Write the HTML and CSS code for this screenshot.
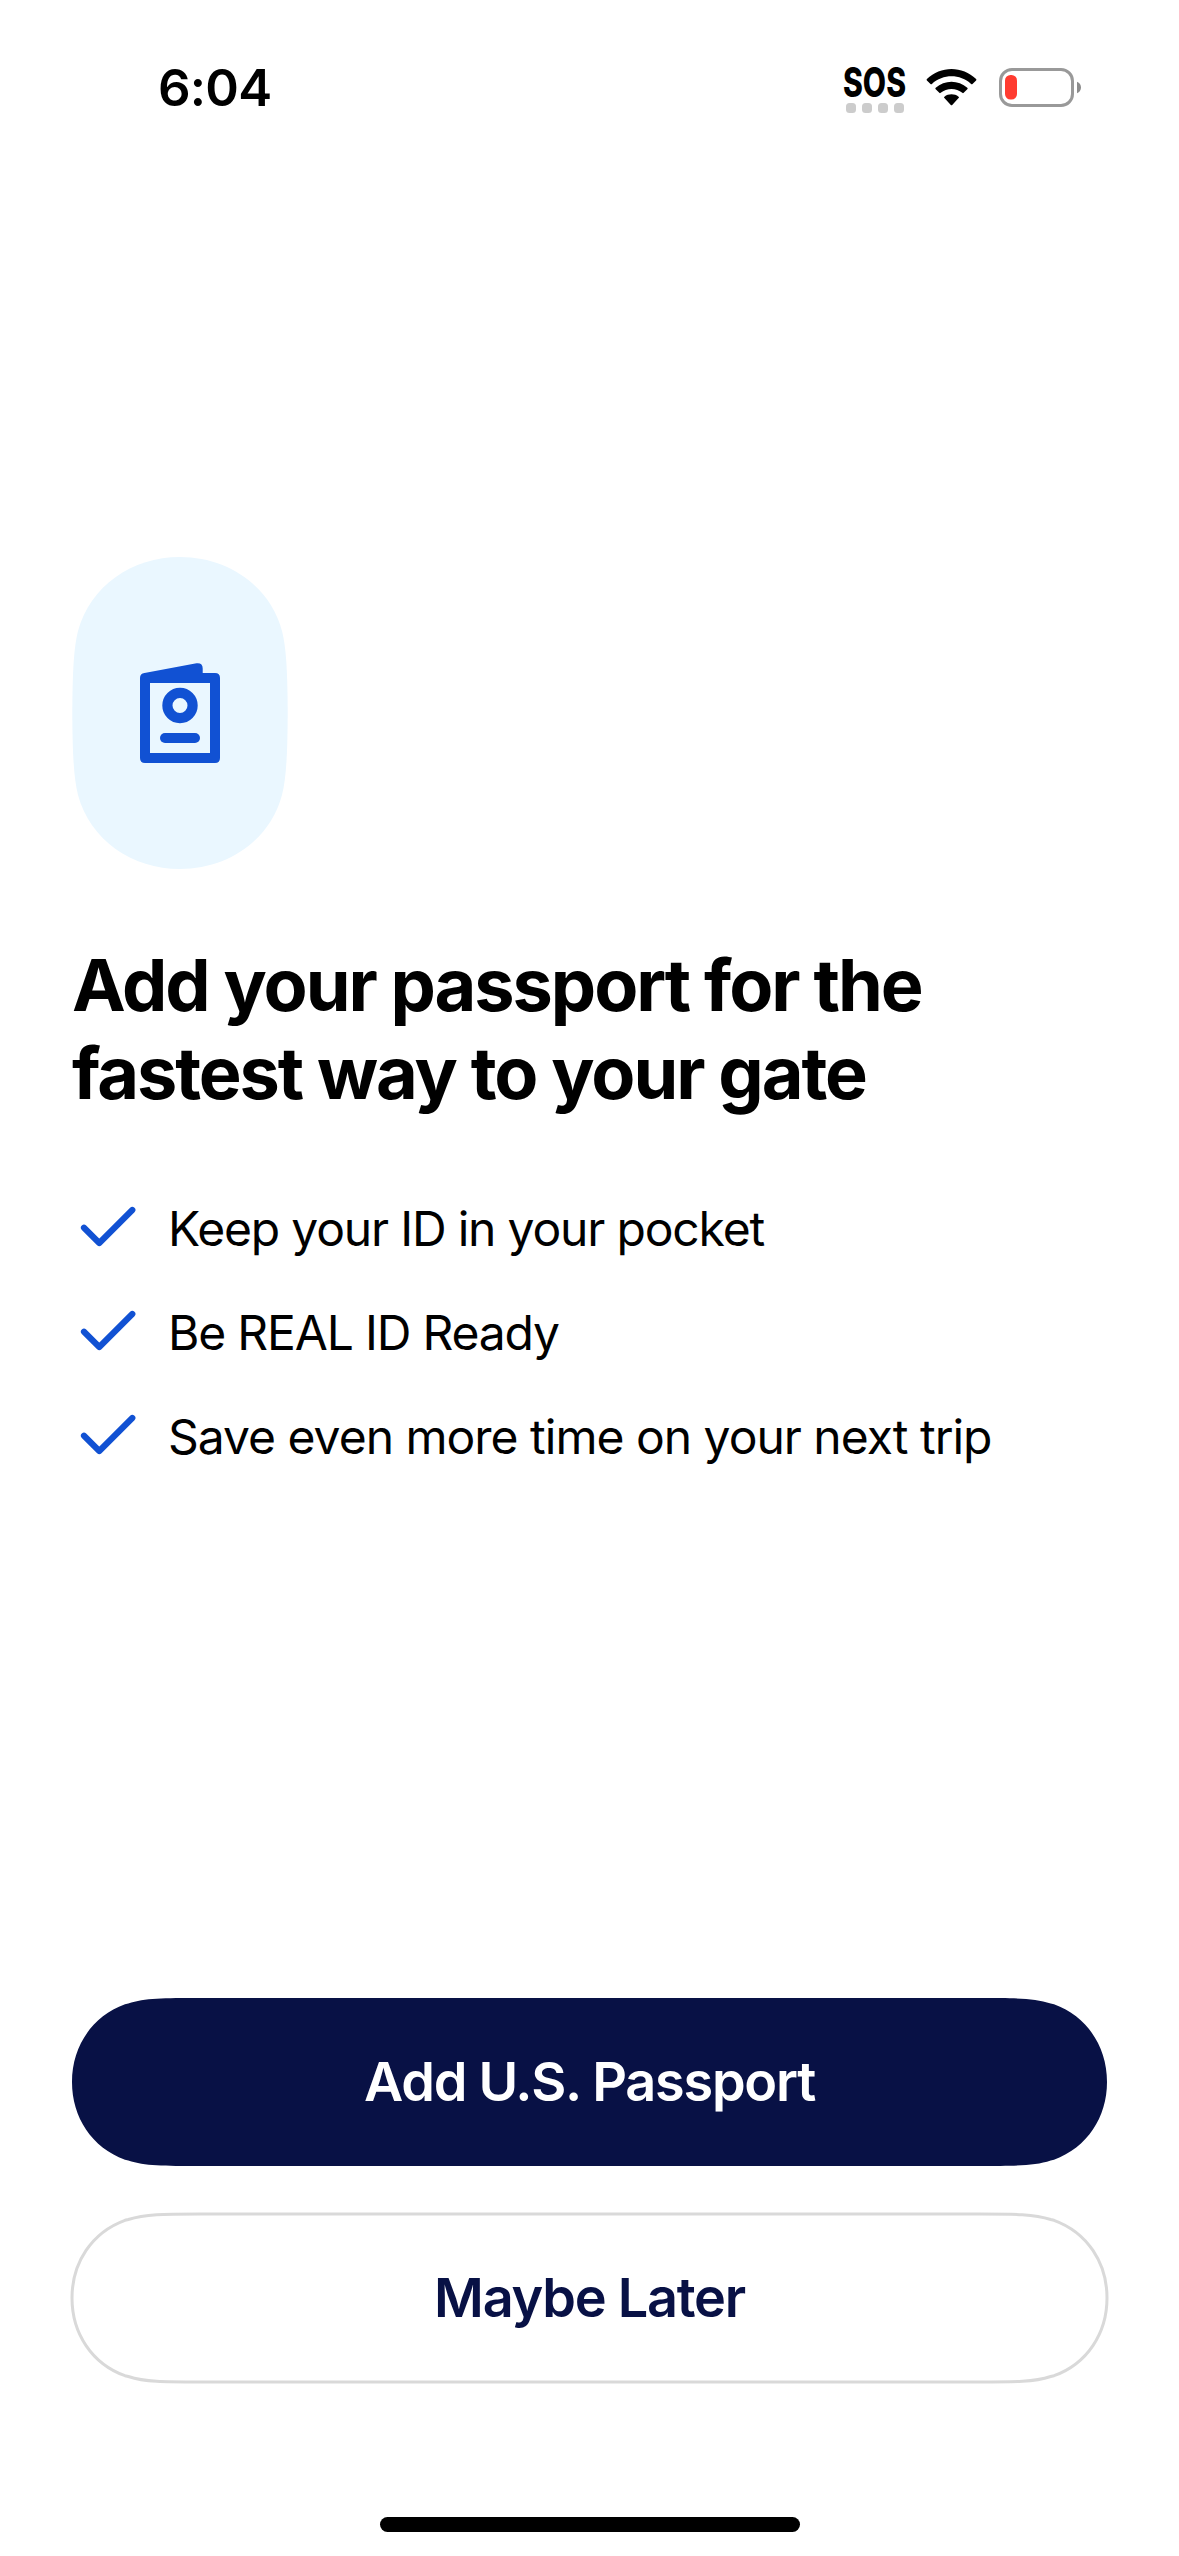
FILE: index.html
```html
<!DOCTYPE html>
<html lang="en">
<head>
<meta charset="utf-8">
<title>Add your passport</title>
<link rel="stylesheet" href="styles.css">
</head>
<body>
<div class="screen">
  <header class="status">
    <span class="time">6:04</span>
    <div class="indicators">
      <svg class="sos" width="64" height="76" viewBox="0 -20 64 76">
        <text class="sos-text" x="1" y="36.500" textLength="63" lengthAdjust="spacingAndGlyphs">SOS</text>
        <g fill="#cccccc">
          <rect x="4" y="43" width="10" height="10" rx="3.500"/>
          <rect x="20" y="43" width="10" height="10" rx="3.500"/>
          <rect x="36" y="43" width="10" height="10" rx="3.500"/>
          <rect x="52" y="43" width="10" height="10" rx="3.500"/>
        </g>
      </svg>
      <svg class="wifi" width="51" height="56" viewBox="0 0 51 56">
        <path d="M.9 20.4a.9.9 0 0 1 0-1.3C14.5 5.7 36.500 5.700 50.100 19.100a.9.9 0 0 1 0 1.300L46.500 23.900a1 1 0 0 1-1.400 0C34 13.700 17 13.700 5.900 23.900a1 1 0 0 1-1.400 0z"/>
        <path d="M9.700 29.200a.9.9 0 0 1 0-1.400C18.500 19.700 32.500 19.700 41.300 27.800a.9.9 0 0 1 0 1.400L37.700 32.800a1 1 0 0 1-1.400 0C30.200 27.600 20.800 27.600 14.700 32.800a1 1 0 0 1-1.400 0z"/>
        <path d="M18.400 38.100a.9.9 0 0 1 0-1.400C22.400 33.500 28.600 33.500 32.600 36.700a.9.9 0 0 1 0 1.400L26.200 44.900a1 1 0 0 1-1.400 0z"/>
      </svg>
      <svg class="battery" width="84" height="56" viewBox="0 0 84 56">
        <rect x="1.500" y="9.500" width="72" height="36" rx="11.500" fill="none" stroke="#999999" stroke-width="3"/>
        <rect x="6" y="15" width="12" height="24.500" rx="5.500" fill="#ff3b30"/>
        <path d="M78 21.700C80.600 22.700 82 25 82 27.500S80.600 32.300 78 33.300z" fill="#8c8c8c"/>
      </svg>
    </div>
  </header>

  <main class="content">
    <svg class="badge" width="216" height="312" viewBox="0 0 216 312">
      <path fill="#eaf7ff" d="M.3 156C.5 118 1.500 92 6 74C18 29 60 0 108 0S198 29 210 74C214.500 92 215.500 118 215.700 156C215.500 194 214.500 220 210 238C198 283 156 312 108 312S18 283 6 238C1.500 220 .5 194 .3 156Z"/>
      <g fill="#1151d3">
        <path fill-rule="evenodd" d="M68 121Q68 116.500 72.500 115.900L124.500 106.200Q130.700 105.500 130.700 111.500V116H143Q148 116 148 121V201Q148 206 143 206H73Q68 206 68 201ZM78 126V196H138V126Z"/>
        <rect x="88" y="176" width="40" height="10" rx="5"/>
      </g>
      <circle cx="108" cy="148.500" r="12.600" fill="none" stroke="#1151d3" stroke-width="10.200"/>
    </svg>

    <h1 class="title">Add your passport for the<br>fastest way to your gate</h1>

    <ul class="benefits">
      <li class="benefit">
        <svg class="check" width="72" height="72" viewBox="0 0 72 72"><path d="M12 37.800L27.300 53L60.300 20"/></svg>
        <span class="keep">Keep your ID in your pocket</span>
      </li>
      <li class="benefit">
        <svg class="check" width="72" height="72" viewBox="0 0 72 72"><path d="M12 37.800L27.300 53L60.300 20"/></svg>
        <span class="real">Be REAL ID Ready</span>
      </li>
      <li class="benefit">
        <svg class="check" width="72" height="72" viewBox="0 0 72 72"><path d="M12 37.800L27.300 53L60.300 20"/></svg>
        <span class="save">Save even more time on your next trip</span>
      </li>
    </ul>
  </main>

  <footer class="actions">
    <button class="button primary" type="button">
      <svg class="shape" width="1035" height="168" viewBox="0 0 1035 168"><path d="M128.400 0H906.600C943.600 0 962.100 0 978.700 5.500L982 6.300C1015.200 18.400 1035 48.700 1035 84S1015.200 149.600 982 161.700L978.700 162.500C962.100 168 943.600 168 906.600 168H128.400C91.400 168 72.900 168 56.300 162.500L53 161.700C19.800 149.600 0 119.300 0 84S19.800 18.400 53 6.300L56.300 5.500C72.900 0 91.400 0 128.400 0Z"/></svg>
      <span class="label add">Add U.S. Passport</span>
    </button>
    <button class="button secondary" type="button">
      <svg class="shape" width="1035" height="168" viewBox="0 0 1035 168"><path d="M128.400 0H906.600C943.600 0 962.100 0 978.700 5.500L982 6.300C1015.200 18.400 1035 48.700 1035 84S1015.200 149.600 982 161.700L978.700 162.500C962.100 168 943.600 168 906.600 168H128.400C91.400 168 72.900 168 56.300 162.500L53 161.700C19.800 149.600 0 119.300 0 84S19.800 18.400 53 6.300L56.300 5.500C72.900 0 91.400 0 128.400 0Z"/></svg>
      <span class="label later">Maybe Later</span>
    </button>
  </footer>
  <div class="home-indicator"></div>
</div>
</body>
</html>
```
FILE: styles.css
```css
* {
  box-sizing: border-box;
}

body {
  margin: 0;
  background: #ffffff;
  color: #000000;
  font-family: Inter, "Liberation Sans", sans-serif;
}

.screen {
  display: flex;
  flex-direction: column;
  width: 1179px;
  height: 2556px;
  padding-bottom: 24px;
}

.status {
  display: flex;
  justify-content: space-between;
  height: 177px;
  padding: 57px 96px 0 158px;
}

.time {
  font-size: 51px;
  font-weight: 600;
  line-height: 61px;
  letter-spacing: -0.8px;
}

.indicators {
  display: flex;
  align-items: flex-start;
  padding-top: 3px;
}

.sos {
  margin: -20px 20px 0 0;
  overflow: visible;
}

.sos-text {
  font-size: 40.5px;
  font-weight: 800;
}

.wifi {
  margin-right: 22px;
}

.content {
  display: flex;
  flex: 1;
  flex-direction: column;
  padding: 380px 72px 0;
}

.title {
  margin: 72px 0 0;
  font-size: 72px;
  font-weight: 700;
  line-height: 88px;
  letter-spacing: -2.08px;
  white-space: nowrap;
}

.benefits {
  display: flex;
  flex-direction: column;
  gap: 32px;
  margin: 73px 0 0;
  padding: 0;
  list-style: none;
}

.benefit {
  display: flex;
  gap: 24px;
  height: 72px;
  font-size: 48px;
  line-height: 78px;
  letter-spacing: -1.18px;
  white-space: nowrap;
}

.save {
  letter-spacing: -1px;
}

.check {
  fill: none;
  stroke: #1151d3;
  stroke-width: 6.2;
  stroke-linecap: round;
  stroke-linejoin: round;
}

.actions {
  display: flex;
  flex-direction: column;
  gap: 48px;
  padding: 0 72px;
}

.button {
  display: grid;
  place-items: center;
  width: 1035px;
  height: 168px;
  padding: 0;
  border: 0;
  background: none;
  font: inherit;
}

.shape,
.label {
  grid-area: 1 / 1;
}

.shape {
  overflow: visible;
}

.label {
  z-index: 1;
  font-size: 54px;
  font-weight: 600;
  line-height: 66px;
  letter-spacing: -1.25px;
}

.primary {
  color: #ffffff;
  fill: #081145;
}

.secondary {
  color: #081145;
  fill: none;
  stroke: #d9d9d9;
  stroke-width: 3;
}

.home-indicator {
  align-self: center;
  width: 420px;
  height: 15px;
  margin: 135px 0 0 1px;
  border-radius: 8px;
  background: #000000;
}
```
